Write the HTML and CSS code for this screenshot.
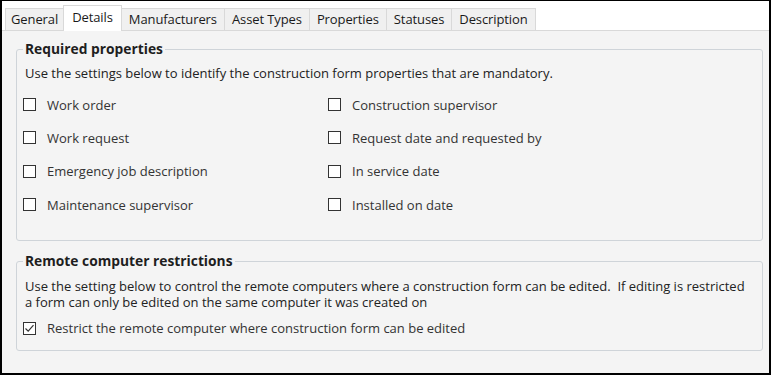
FILE: index.html
```html
<!DOCTYPE html>
<html>
<head>
<meta charset="utf-8">
<link rel="stylesheet" href="styles.css">
</head>
<body>
<div class="frame">
  <div class="tabs">
    <div class="tab">General</div>
    <div class="tab active">Details</div>
    <div class="tab">Manufacturers</div>
    <div class="tab">Asset Types</div>
    <div class="tab">Properties</div>
    <div class="tab">Statuses</div>
    <div class="tab">Description</div>
  </div>
  <div class="panel">
    <fieldset class="group group-req">
      <legend>Required properties</legend>
      <p class="desc">Use the settings below to identify the construction form properties that are mandatory.</p>
      <div class="grid">
        <label class="chk"><span class="box"></span>Work order</label>
        <label class="chk"><span class="box"></span>Construction supervisor</label>
        <label class="chk"><span class="box"></span>Work request</label>
        <label class="chk"><span class="box"></span>Request date and requested by</label>
        <label class="chk"><span class="box"></span>Emergency job description</label>
        <label class="chk"><span class="box"></span>In service date</label>
        <label class="chk"><span class="box"></span>Maintenance supervisor</label>
        <label class="chk"><span class="box"></span>Installed on date</label>
      </div>
    </fieldset>
    <fieldset class="group group-remote">
      <legend>Remote computer restrictions</legend>
      <p class="desc two">Use the setting below to control the remote computers where a construction form can be edited.&nbsp; If editing is restricted<br>a form can only be edited on the same computer it was created on</p>
      <label class="chk single"><span class="box checked"><svg viewBox="0 0 13 13" width="13" height="13"><path d="M2.5 6.5 L5.2 9.2 L10.5 3.2" fill="none" stroke="#333" stroke-width="1.2"/></svg></span>Restrict the remote computer where construction form can be edited</label>
    </fieldset>
  </div>
</div>
</body>
</html>
```
FILE: styles.css
```css
html, body {
  margin: 0;
  padding: 0;
  background: #fff;
}
.frame {
  width: 771px;
  height: 375px;
  box-sizing: border-box;
  border: 2px solid #000;
  border-top-width: 1px;
  background: #fff;
  display: flex;
  flex-direction: column;
  font-family: "Open Sans", "Noto Sans", sans-serif;
  font-size: 13px;
  color: #222;
}
.tabs {
  display: flex;
  align-items: flex-end;
  padding-left: 3px;
  padding-top: 4px;
  height: 25px;
}
.tab {
  height: 22px;
  box-sizing: border-box;
  border: 1px solid #d9d9d9;
  border-bottom: none;
  background: #f0f0f0;
  padding: 0 7px;
  margin-left: -1px;
  line-height: 21px;
  color: #1a1a1a;
  letter-spacing: -0.1px;
}
.tab:first-child { margin-left: 0; padding: 0 5px; }
.tab.active {
  height: 26px;
  background: #fff;
  position: relative;
  z-index: 1;
  margin-bottom: -1px;
  line-height: 22px;
  padding: 0 8px 3px;
}
.panel {
  flex: 1;
  border-top: 1px solid #d9d9d9;
  background: #f4f4f4;
  padding: 10px 6px 0 14px;
}
.group {
  margin: 0;
  border: 1px solid #cfd4d9;
  border-radius: 3px;
  padding: 0 6px 0 6px;
}
.group legend {
  font-weight: bold;
  font-size: 13.8px;
  color: #1e1e1e;
  padding: 0 2px;
  margin-left: 0;
  letter-spacing: 0;
  line-height: 16px;
}
.desc {
  margin: 8px 0 0 2px;
  line-height: 16px;
  letter-spacing: 0;
  color: #222;
}
.grid {
  display: grid;
  grid-template-columns: 305px 1fr;
  grid-auto-rows: 33.3px;
  margin-top: 7px;
  padding-bottom: 19px;
}
.chk {
  display: flex;
  align-items: center;
  color: #333;
  letter-spacing: 0;
}
.box {
  width: 13px;
  height: 13px;
  box-sizing: border-box;
  border: 1px solid #333;
  background: #fff;
  margin-right: 11px;
  flex: none;
  position: relative;
}
.box svg {
  position: absolute;
  left: -1px;
  top: -1px;
}
.group-remote {
  margin-top: 12px;
}
.desc.two {
  margin-top: 9px;
}
.single {
  height: 22px;
  margin-top: 7px;
  margin-bottom: 11px;
}
```
